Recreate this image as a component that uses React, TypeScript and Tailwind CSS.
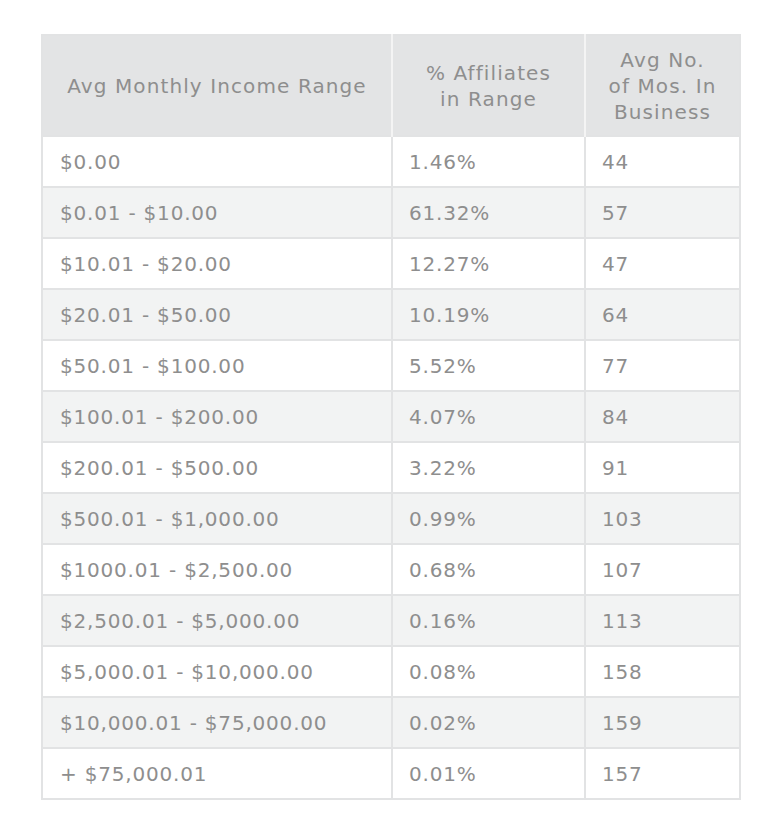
const rows: [string, string, string][] = [
  ["$0.00", "1.46%", "44"],
  ["$0.01 - $10.00", "61.32%", "57"],
  ["$10.01 - $20.00", "12.27%", "47"],
  ["$20.01 - $50.00", "10.19%", "64"],
  ["$50.01 - $100.00", "5.52%", "77"],
  ["$100.01 - $200.00", "4.07%", "84"],
  ["$200.01 - $500.00", "3.22%", "91"],
  ["$500.01 - $1,000.00", "0.99%", "103"],
  ["$1000.01 - $2,500.00", "0.68%", "107"],
  ["$2,500.01 - $5,000.00", "0.16%", "113"],
  ["$5,000.01 - $10,000.00", "0.08%", "158"],
  ["$10,000.01 - $75,000.00", "0.02%", "159"],
  ["+ $75,000.01", "0.01%", "157"],
];

export default function App() {
  return (
    <div className="w-[784px] h-[824px] bg-white pt-[34px] pl-[41px]" style={{ fontFamily: '"DejaVu Sans", sans-serif' }}>
      <table className="border-collapse table-fixed text-[#8e8e8e] text-[20px] tracking-[0.8px] border-2 border-[#e2e3e4]">
        <thead>
          <tr className="bg-[#e3e4e5] h-[101px] tracking-[1.1px]">
            <th className="w-[350px] font-normal text-center leading-[26px] border-r-2 border-[#f4f4f4]">
              Avg Monthly Income Range
            </th>
            <th className="w-[193px] font-normal text-center leading-[26px] border-r-2 border-[#f4f4f4]">
              % Affiliates<br />in Range
            </th>
            <th className="w-[155px] font-normal text-center leading-[26px]">
              Avg No.<br />of Mos. In<br />Business
            </th>
          </tr>
        </thead>
        <tbody>
          {rows.map((r, i) => (
            <tr key={i} className={`h-[51px] border-t-2 border-[#e2e3e4] ${i % 2 === 1 ? "bg-[#f2f3f3]" : "bg-white"}`}>
              <td className="pl-[17px] border-r-2 border-[#e2e3e4]">{r[0]}</td>
              <td className="pl-[16px] border-r-2 border-[#e2e3e4]">{r[1]}</td>
              <td className="pl-[16px]">{r[2]}</td>
            </tr>
          ))}
        </tbody>
      </table>
    </div>
  );
}
